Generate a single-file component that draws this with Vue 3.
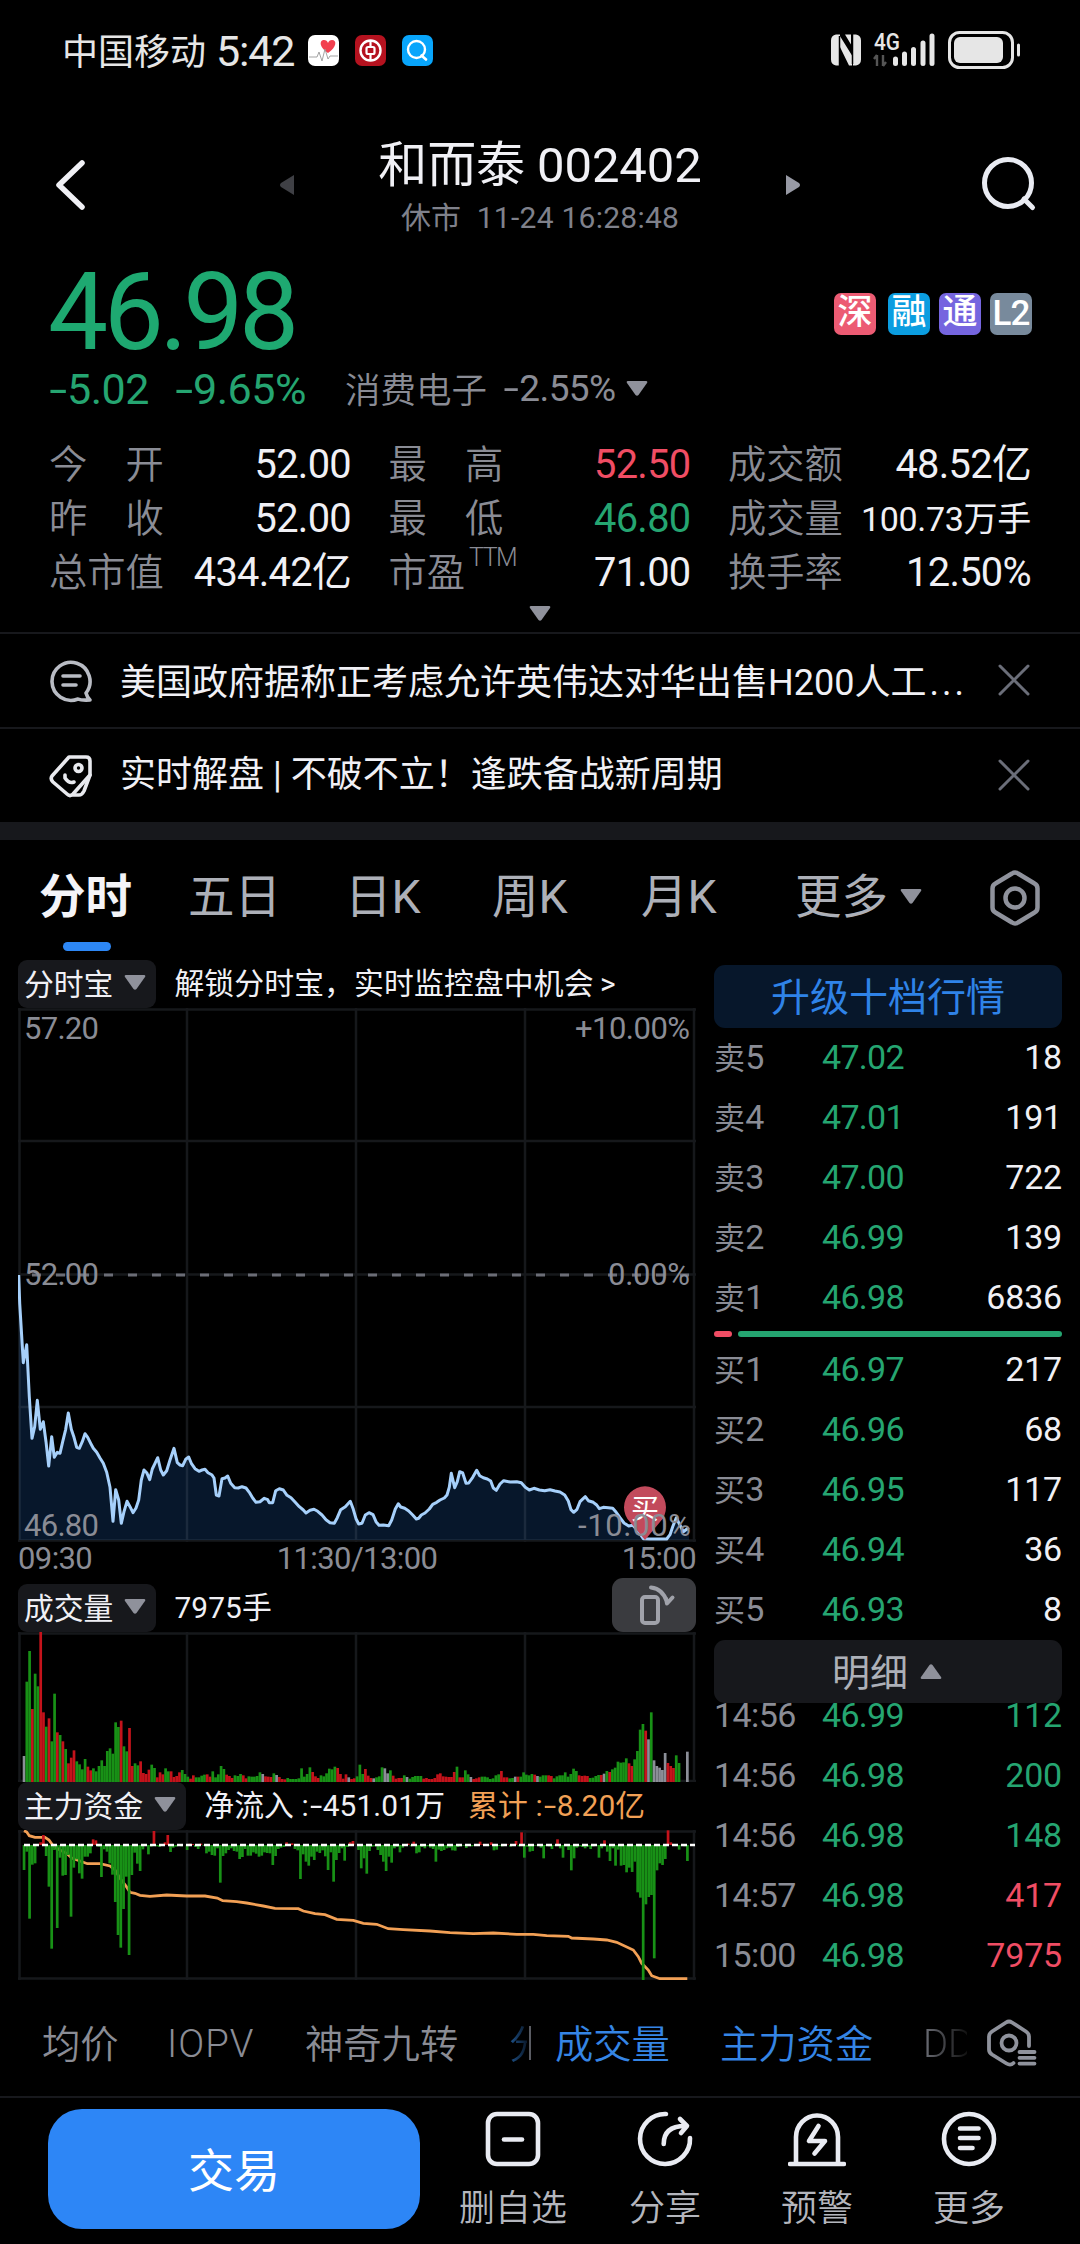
<script setup>
const stats = [
  { label: '今　开', value: '52.00' },
  { label: '最　高', value: '52.50', tone: 'up' },
  { label: '成交额', value: '48.52亿' },
  { label: '昨　收', value: '52.00' },
  { label: '最　低', value: '46.80', tone: 'down' },
  { label: '成交量', value: '100.73万手', small: true },
  { label: '总市值', value: '434.42亿' },
  { label: '市盈', sup: 'TTM', value: '71.00' },
  { label: '换手率', value: '12.50%' },
]
const tags = [
  { t: '深', c: 'sz' },
  { t: '融', c: 'rz' },
  { t: '通', c: 'ht' },
  { t: 'L2', c: 'l2' },
]
const asks = [
  ['5', '47.02', '18'],
  ['4', '47.01', '191'],
  ['3', '47.00', '722'],
  ['2', '46.99', '139'],
  ['1', '46.98', '6836'],
]
const bids = [
  ['1', '46.97', '217'],
  ['2', '46.96', '68'],
  ['3', '46.95', '117'],
  ['4', '46.94', '36'],
  ['5', '46.93', '8'],
]
const ticks = [
  ['14:56', '46.99', '112', 'down'],
  ['14:56', '46.98', '200', 'down'],
  ['14:56', '46.98', '148', 'down'],
  ['14:57', '46.98', '417', 'up'],
  ['15:00', '46.98', '7975', 'up'],
]

// Price curve, in thirds of a pixel: morning and afternoon sessions.
const morning = [
  [56, 75], [59, 160], [70, 338], [80, 284], [88, 440], [96, 565], [104, 530], [112, 451], [121, 538], [130, 515],
  [138, 575], [146, 648], [155, 560], [163, 622], [172, 607], [180, 610], [188, 575], [197, 538], [205, 489],
  [214, 538], [222, 562], [230, 592], [238, 595], [247, 575], [255, 551], [263, 562], [272, 580], [280, 595],
  [290, 607], [300, 624], [310, 640], [320, 667], [330, 712], [339, 814], [347, 719], [356, 750], [364, 820],
  [372, 785], [381, 754], [390, 770], [399, 788], [408, 774], [416, 750], [424, 690], [432, 660], [440, 668],
  [449, 689], [457, 657], [465, 640], [473, 623], [482, 660], [490, 675], [500, 662], [510, 630], [522, 595],
  [532, 638], [540, 645], [548, 647], [557, 628], [566, 621], [574, 640], [585, 656], [597, 664], [606, 660],
  [615, 658], [624, 668], [635, 674], [642, 684], [649, 735], [657, 738], [666, 686], [675, 684], [683, 678],
  [692, 700], [704, 713], [715, 714], [726, 710], [738, 714], [748, 727], [758, 744], [768, 757], [780, 755],
  [793, 745], [803, 749], [808, 758], [818, 758], [827, 722], [838, 716], [850, 720], [861, 736], [873, 743],
  [885, 756], [898, 770], [910, 780], [918, 789], [930, 781], [942, 778], [953, 784], [966, 795], [978, 809],
  [990, 818], [1003, 820], [1012, 803], [1022, 779], [1036, 770], [1051, 754], [1060, 778], [1068, 806], [1076, 822],
]
const afternoon = [
  [36, 370], [46, 345], [57, 338], [69, 344], [78, 365], [87, 376], [100, 375], [116, 377], [125, 360], [136, 327],
  [145, 311], [152, 321], [164, 325], [176, 333], [188, 345], [199, 357], [206, 355], [214, 345], [225, 339],
  [238, 327], [248, 313], [260, 307], [270, 300], [283, 294], [291, 285], [298, 262], [304, 220], [314, 263],
  [322, 245], [329, 215], [338, 219], [348, 250], [356, 249], [368, 232], [380, 211], [389, 227], [400, 233],
  [412, 237], [422, 243], [430, 264], [439, 271], [450, 252], [461, 242], [480, 246], [500, 245], [514, 248],
  [526, 262], [538, 270], [552, 265], [568, 270], [584, 272], [600, 269], [615, 273], [630, 276], [644, 285],
  [655, 303], [663, 329], [671, 337], [681, 328], [690, 305], [706, 290], [715, 302], [730, 307], [740, 315],
  [748, 326], [760, 322], [775, 323], [788, 325], [798, 336], [810, 353], [822, 369], [836, 378], [848, 376],
  [862, 390], [880, 416], [900, 417], [950, 417], [960, 404], [968, 380], [979, 353], [990, 376], [1000, 395], [1012, 386], [1017, 388],
]
const curve = [...morning, ...afternoon.map(([x, y]) => [x + 1050, y + 450])]
  .map(([x, y]) => [x / 3 - 18, y / 3 + 242])
const line = curve.map((p) => p.map((n) => n.toFixed(1)).join(',')).join(' ')
const area = `1,532 ${line} 671,532`

// Minute volume: colour letter plus height.
const vol = (
  'w78 g301 g393 r219 g325 g287 r450 r209 g166 r191 g122 g265 r149 g141 r122 g99 r56 r73 r95 g62 g53 g38 g69 r46 r35 ' +
  'g41 g32 g48 g65 g48 g93 g101 g85 g179 g165 r184 g107 g92 r162 r48 g56 g50 r62 r27 r24 r37 g52 g42 r14 r29 r23 ' +
  'g41 g32 r32 r15 r18 r29 g36 g24 g16 r10 r20 g14 g14 g19 g22 r23 r16 g32 g14 g23 g48 g39 r22 r18 r12 g20 g18 g24 ' +
  'r20 r11 g17 g16 g16 g18 g29 w24 r17 r16 r15 g26 w21 r15 r9 r8 g12 g9 g9 g9 g11 g41 g16 g24 g44 r30 r17 r12 g20 ' +
  'g17 g26 g40 g38 g46 r42 r24 r10 r23 w14 r9 r11 g17 g52 g24 r39 r19 r12 w11 g14 g17 g44 w41 w26 g35 r19 r10 r12 ' +
  'r12 g20 w15 g10 g15 g18 g18 g18 r10 r12 r9 r9 r12 r23 r26 r17 r16 r15 r15 r30 g46 r14 r14 g35 g23 w15 r9 r11 r14 ' +
  'g16 g16 g14 g9 g11 g20 g23 r33 r14 r14 g11 g12 w16 r16 g16 g29 g22 g20 g24 r22 w18 g16 g20 g20 r20 r18 g11 g17 ' +
  'g20 g20 g29 g16 g24 g40 g33 r20 r18 r19 r18 g12 g13 g18 g21 r21 w25 g33 r30 g38 g43 g61 g58 g59 g71 r56 r48 g68 ' +
  'g93 g157 g174 r154 w128 g209 w65 w48 w43 w36 w87 r57 r48 r42 g80 g57 w0 w0 w91'
).split(' ')
const volBars = vol.map((s, i) => ({ x: 4.7 + i * (663.3 / (vol.length - 1)), h: +s.slice(1) / 3, c: s[0] }))

// Net flow per minute; negative values rise above the zero line.
const flow = (
  '75 20 221 59 55 0 -8 -30 33 125 311 15 249 38 92 90 30 215 68 43 85 101 35 35 25 -17 -14 5 96 13 20 55 89 171 270 ' +
  '308 192 95 330 90 23 56 78 13 3 28 5 -42 4 6 2 -8 -30 21 8 5 3 4 0 15 -4 -3 6 12 -4 2 25 20 30 32 10 113 33 25 15 ' +
  '10 18 20 42 36 12 32 32 22 26 35 32 22 24 25 60 33 12 8 6 -8 3 -5 12 16 102 28 50 62 35 45 20 24 16 34 75 22 110 ' +
  '45 24 10 47 6 -8 -12 15 70 40 86 18 5 4 15 30 50 78 35 53 10 5 22 8 3 -4 4 -10 25 22 6 10 4 8 12 50 14 18 15 10 ' +
  '8 16 17 6 4 2 9 3 4 2 1 -10 -2 2 3 -8 16 14 3 4 2 -1 5 -2 -12 4 -38 38 5 20 18 2 3 8 40 3 4 12 2 -17 10 38 4 15 ' +
  '76 40 8 4 6 10 5 12 4 3 38 10 -14 20 48 10 62 14 62 60 82 68 81 50 142 158 405 178 156 150 340 76 55 60 42 -44 -8 2 ' +
  '-3 14 2 4 48'
).split(' ').map(Number)
const flowBars = flow.map((v, i) => ({ x: 4.7 + Math.round(i * (240 / (flow.length - 1))) * 2.764, h: Math.abs(v) / 3, up: v < 0 }))

const cum = [
  [72, 782], [80, 786], [88, 797], [105, 802], [135, 802], [147, 810], [160, 828], [180, 840], [200, 850], [215, 864],
  [240, 873], [262, 881], [300, 881], [330, 888], [345, 900], [360, 925], [378, 948], [390, 967], [405, 970], [420, 976],
  [450, 979], [500, 975], [560, 978], [615, 978], [652, 984], [668, 992], [710, 995], [740, 999], [790, 1008],
  [825, 1015], [895, 1016], [910, 1023], [945, 1031], [975, 1034], [1010, 1048], [1060, 1051], [1090, 1060],
  [1130, 1063], [1165, 1076], [1210, 1079], [1290, 1083], [1350, 1088], [1420, 1091], [1480, 1089], [1550, 1093],
  [1600, 1093], [1640, 1097], [1705, 1099], [1715, 1104], [1780, 1107], [1820, 1110], [1850, 1117], [1900, 1140],
  [1915, 1160], [1925, 1180], [1945, 1200], [1955, 1217], [1980, 1226], [2062, 1226],
].map(([x, y]) => `${(x / 3 - 18).toFixed(1)},${(y / 3 - 260).toFixed(1)}`).join(' ')
</script>

<template>
  <div class="page">
    <div class="status">
      <span class="carrier">中国移动</span><span class="clock">5:42</span>
      <svg class="app" viewBox="0 0 31 31"><rect width="31" height="31" rx="7" fill="#fff" /><path d="M20 18c-10-7-8-13-4-13q3 0 4 3q1-3 4-3c5 0 5 7-4 13z" fill="#f2404f" /><path d="M1 22h8l2-5 3 9 3-12 3 10 2-3h8" fill="none" stroke="#999" stroke-width=".9" /></svg>
      <svg class="app" viewBox="0 0 31 31"><rect width="31" height="31" rx="7" fill="#b5121f" /><circle cx="15.500" cy="15.500" r="10" fill="none" stroke="#fff" stroke-width="2.400" /><rect x="11.500" y="12" width="8" height="7" rx="1.500" fill="none" stroke="#fff" stroke-width="2.200" /><path d="M15.500 5v7M15.500 19v7" stroke="#fff" stroke-width="2.200" /></svg>
      <svg class="app" viewBox="0 0 31 31"><rect width="31" height="31" rx="7" fill="#08a5fb" /><circle cx="14.500" cy="14.500" r="8.500" fill="none" stroke="#fff" stroke-width="2.400" /><path d="M19.500 20.500l4.500 4" stroke="#fff" stroke-width="2.600" stroke-linecap="round" /></svg>
      <svg class="sys" width="192" height="40" viewBox="0 0 192 40">
        <path d="M5 3.500h4v31h-4q-5-1-5-6v-19q0-5 5-6zM8 3.500l13 21v10h-3L8 14zM25 3.500q5 1 5 6v19q0 5-5 6h-3v-31zM14 3.500h6v10z" fill="#e6e6e6" />
        <path d="M8.500 5v30M21.500 3v30" stroke="#000" stroke-width="1.500" />
        <text x="43" y="19" font-size="23" font-weight="500" textLength="26" lengthAdjust="spacingAndGlyphs" fill="#e6e6e6">4G</text>
        <path d="M46 24v11M46 24l-3 4M52 24v11M52 35l3-4" stroke="#555" stroke-width="2.400" fill="none" />
        <g stroke="#e6e6e6" stroke-width="5" stroke-linecap="round"><path d="M64.500 28v4.500M73.500 23v9.500M82.500 18.500v14M92 12v20.500M101 5v27.500" /></g>
        <rect x="118.500" y="1.500" width="63" height="35" rx="10" fill="none" stroke="#e6e6e6" stroke-width="3" />
        <rect x="123" y="6" width="49" height="26" rx="6" fill="#e6e6e6" />
        <path d="M187.500 14v10" stroke="#e6e6e6" stroke-width="3" stroke-linecap="round" />
      </svg>
    </div>

    <header class="head">
      <svg class="back" viewBox="0 0 34 56"><path d="M29 6L6 28l23 22" /></svg>
      <svg class="prev" viewBox="0 0 14 20"><path d="M14 0v20L1 12q-2-2 0-4z" fill="#3f4045" /></svg>
      <div class="title">
        <div class="name">和而泰 002402</div>
        <div class="sub">休市&nbsp; 11-24 16:28:48</div>
      </div>
      <svg class="next" viewBox="0 0 14 20"><path d="M0 0v20l13-8q2-2 0-4z" fill="#9799a4" /></svg>
      <svg class="search" viewBox="0 0 56 56"><circle cx="27" cy="26" r="23.500" /><path d="M43 42l8.500 8.500" /></svg>
    </header>

    <section class="quote">
      <div class="price-row">
        <span class="price">46.98</span>
        <div class="tags"><span v-for="g in tags" :key="g.t" :class="['tag', g.c]">{{ g.t }}</span></div>
      </div>
      <div class="change">
        <span class="chg c1"><b class="m">-</b>5.02</span><span class="chg c2"><b class="m">-</b>9.65%</span>
        <span class="ind">消费电子</span><span class="indv"><b class="m">-</b>2.55%</span>
        <svg class="tri" viewBox="0 0 22 15"><path d="M2 0h18q2 0 1 2l-8.500 12q-1.500 1.500-3 0L1 2Q0 0 2 0z" /></svg>
      </div>
      <div class="stats">
        <div v-for="s in stats" :key="s.label" class="cell">
          <span class="lab">{{ s.label }}<sup v-if="s.sup">{{ s.sup }}</sup></span>
          <span :class="['val', s.tone, { small: s.small }]">{{ s.value }}</span>
        </div>
      </div>
      <div class="expand"><svg class="tri" viewBox="0 0 22 15"><path d="M2 0h18q2 0 1 2l-8.500 12q-1.500 1.500-3 0L1 2Q0 0 2 0z" /></svg></div>
    </section>

    <div class="news">
      <svg class="nicon" viewBox="0 0 44 44"><path d="M37 34a19 19 0 1 0-8 6q3 1.500 12 1q-3-3-4-7z" stroke="#b9bcc4" /><path d="M14 17h17M14 26h13" stroke="#b9bcc4" /></svg>
      <span class="ntext">美国政府据称正考虑允许英伟达对华出售H200人工<span class="dots">...</span></span>
      <svg class="close" viewBox="0 0 32 32"><path d="M2 2l28 28M30 2L2 30" /></svg>
    </div>
    <div class="news second">
      <svg class="nicon" viewBox="0 0 44 44"><path d="M20 3h17q4 0 4 4v14L24 40q-3 3-6 0L4 28q-3-3-1-6z" stroke="#e8e9ee" /><path d="M24 41h6q3 0 5-4l6-16" stroke="#e8e9ee" /><circle cx="29.500" cy="14" r="3.500" stroke="#e8e9ee" /><path d="M16 21v3q4 6 9 4" stroke="#e8e9ee" /></svg>
      <span class="ntext">实时解盘 | 不破不立！逢跌备战新周期</span>
      <svg class="close" viewBox="0 0 32 32"><path d="M2 2l28 28M30 2L2 30" /></svg>
    </div>
    <div class="band"></div>

    <nav class="tabs">
      <span class="tab on">分时</span><span class="tab t2">五日</span><span class="tab t3">日K</span><span class="tab t4">周K</span><span class="tab t5">月K</span><span class="tab t6">更多</span>
      <svg class="tri more" viewBox="0 0 22 15"><path d="M2 0h18q2 0 1 2l-8.500 12q-1.500 1.500-3 0L1 2Q0 0 2 0z" /></svg>
      <svg class="hex" viewBox="0 0 50 56"><path d="M22 3.500q3-2 6 0l16.500 10q3 1.500 3 5v19q0 3.500-3 5L28 52.500q-3 2-6 0L5.500 42.500q-3-1.500-3-5v-19q0-3.500 3-5z" /><circle cx="25" cy="28" r="9.500" /></svg>
    </nav>

    <main class="main">
      <div class="left">
        <div class="tool">
          <span class="chip">分时宝<svg class="tri" viewBox="0 0 22 15"><path d="M2 0h18q2 0 1 2l-8.500 12q-1.500 1.500-3 0L1 2Q0 0 2 0z" /></svg></span>
          <span class="note">解锁分时宝，实时监控盘中机会&thinsp;&gt;</span>
        </div>
        <svg class="chart" width="678" height="534" viewBox="0 0 678 534">
          <polygon :points="area" fill="#07172b" />
          <g class="grid"><path d="M1.500 0V534M169 0V534M338 0V534M507 0V534M676 0V534M0 1.500H678M0 133H678M0 266.500H678M0 399H678M0 532.500H678" /></g>
          <path d="M14 267H674" stroke="#6b6d76" stroke-width="3" stroke-dasharray="9 15" />
          <polyline :points="line" fill="none" stroke="#a6d0fb" stroke-width="3" stroke-linejoin="round" />
          <path d="M627 532L612 514A21 21 0 1 1 642 514z" fill="#c24a5c" />
          <text x="613" y="511" font-size="28" fill="#fff">买</text>
          <g class="axis">
            <text x="6" y="31" textLength="75">57.20</text>
            <text x="6" y="277" textLength="75">52.00</text>
            <text x="6" y="528" textLength="75">46.80</text>
            <text x="557" y="31" textLength="115">+10.00%</text>
            <text x="590" y="277" textLength="82">0.00%</text>
            <text x="560" y="528" textLength="113">-10.00%</text>
          </g>
        </svg>
        <div class="times"><span>09:30</span><span>11:30/13:00</span><span>15:00</span></div>
        <div class="tool tall">
          <span class="chip">成交量<svg class="tri" viewBox="0 0 22 15"><path d="M2 0h18q2 0 1 2l-8.500 12q-1.500 1.500-3 0L1 2Q0 0 2 0z" /></svg></span>
          <span class="note">7975手</span>
          <span class="rotate"><svg viewBox="0 0 84 54"><rect x="30" y="19" width="16" height="26" rx="3" /><path d="M39 9.500Q51 11 55 24M55 25.500l5.500-6M55 25.500l-1-5" /></svg></span>
        </div>
        <svg class="chart" width="678" height="150" viewBox="0 0 678 150">
          <g class="grid"><path d="M1.500 0V150M169 0V150M338 0V150M507 0V150M676 0V150M0 1.500H678M0 149H678" /></g>
          <rect v-for="(b, i) in volBars" :key="i" :x="b.x" :y="150 - b.h" width="2.7" :height="b.h" :class="'b' + b.c" />
        </svg>
        <div class="tool">
          <span class="chip">主力资金<svg class="tri" viewBox="0 0 22 15"><path d="M2 0h18q2 0 1 2l-8.500 12q-1.500 1.500-3 0L1 2Q0 0 2 0z" /></svg></span>
          <span class="note">净流入 :<b class="m">-</b>451.01万</span><span class="note gold">累计 :<b class="m">-</b>8.20亿</span>
        </div>
        <svg class="chart" width="678" height="150" viewBox="0 0 678 150">
          <g class="grid"><path d="M1.500 0V150M169 0V150M338 0V150M507 0V150M676 0V150M0 1.500H678M0 148.500H678" /></g>
          <polyline :points="cum" fill="none" stroke="#f2a055" stroke-width="2.800" />
          <rect v-for="(b, i) in flowBars" :key="i" :x="b.x" :y="b.up ? 15 - b.h : 15" width="2.7" :height="b.h" :class="b.up ? 'br' : 'bg'" />
          <path d="M6 15H677" stroke="#fff" stroke-width="2.400" stroke-dasharray="6 3" />
        </svg>
      </div>

      <div class="right">
        <div class="upgrade">升级十档行情</div>
        <div v-for="r in asks" :key="'s' + r[0]" class="row"><span class="lv">卖<i>{{ r[0] }}</i></span><span class="px">{{ r[1] }}</span><span class="qty">{{ r[2] }}</span></div>
        <div class="ratio"><span class="buy"></span><span class="sell"></span></div>
        <div v-for="r in bids" :key="'b' + r[0]" class="row"><span class="lv">买<i>{{ r[0] }}</i></span><span class="px">{{ r[1] }}</span><span class="qty">{{ r[2] }}</span></div>
        <div class="detail"><span>明细</span><svg class="tri flip" viewBox="0 0 22 15"><path d="M2 0h18q2 0 1 2l-8.500 12q-1.500 1.500-3 0L1 2Q0 0 2 0z" /></svg></div>
        <div class="ticks">
          <div v-for="(r, i) in ticks" :key="i" class="row"><span class="tm">{{ r[0] }}</span><span class="px">{{ r[1] }}</span><span :class="['qty', 'thin', r[3]]">{{ r[2] }}</span></div>
        </div>
      </div>
    </main>

    <div class="inds">
      <span class="i1">均价</span><span class="i2">IOPV</span><span class="i3">神奇九转</span><span class="cut">分</span><span class="sep"></span>
      <span class="blue i4">成交量</span><span class="blue i5">主力资金</span><span class="dd">DD</span>
      <svg class="gear" viewBox="0 0 50 48"><path d="M26.500 44q-3 3-7 .5L5 35.500q-3-2-3-5V17.500q0-3 3-5L19 3.500q3-2 6 0L39 12.500q3 2 3 5v9.500" /><circle cx="22" cy="24" r="7.500" /><path d="M32.500 33h15M32.500 38.800h15M32.500 44.600h15" /></svg>
    </div>

    <footer class="foot">
      <button class="trade">交易</button>
      <div class="act a1"><svg viewBox="0 0 58 58"><rect x="4" y="4" width="50" height="50" rx="9" /><path d="M20 29.500h18" /></svg><span>删自选</span></div>
      <div class="act a2"><svg viewBox="0 0 58 58"><path d="M30 4A25 25 0 1 0 54 28" /><path d="M27.700 34Q27.700 16 49 16M44 9l7 7-6 7" /></svg><span>分享</span></div>
      <div class="act a3"><svg viewBox="0 0 58 58"><path d="M8 54V27a21 21.500 0 0 1 42 0V54M2 54H56" /><path d="M30.500 16L21 31h16l-10.500 12.500" /></svg><span>预警</span></div>
      <div class="act a4"><svg viewBox="0 0 58 58"><circle cx="29" cy="29" r="25" /><path d="M20 18.500h18.500M20 28h18.500M20 38h12.500" /></svg><span>更多</span></div>
    </footer>
  </div>
</template>

<style>
body { background: #000; }
</style>

<style scoped>
.page { width: 1080px; height: 2244px; overflow: hidden; background: #000; color: #f0f0f5; font-family: Roboto, "Noto Sans CJK SC", sans-serif; font-weight: 400; white-space: nowrap; }
svg { display: block; flex: none; }
span { flex: none; }
.up { color: #f04d64 !important; }
.down { color: #25a571 !important; }
.tri { width: 22px; height: 15px; fill: #8f919b; }
.m { display: inline-block; font-weight: inherit; transform: scaleX(1.5); transform-origin: 50% 50%; margin: 0 .09em; }

.status { display: flex; align-items: center; height: 101px; padding: 0 57px 0 62px; box-sizing: border-box; color: #e6e6e6; }
.carrier { width: 154px; margin-top: -3px; font-size: 36px; }
.clock { width: 92px; font-size: 43px; letter-spacing: -1.2px; }
.app { width: 31px; height: 31px; margin-right: 16px; }
.sys { margin-left: auto; font-family: Roboto, sans-serif; }

.head { display: flex; align-items: center; height: 168px; }
.back { width: 34px; height: 56px; margin-left: 53px; fill: none; stroke: #f0f0f5; stroke-width: 5.5; stroke-linecap: round; stroke-linejoin: round; }
.prev { width: 14px; height: 20px; margin-left: 193px; }
.title { width: 492px; padding-top: 9px; text-align: center; }
.name { font-size: 49px; line-height: 56px; letter-spacing: -.1px; }
.sub { font-size: 30px; line-height: 48px; color: #7f818b; letter-spacing: .25px; }
.next { width: 14px; height: 20px; }
.search { width: 56px; height: 56px; margin-left: 181px; fill: none; stroke: #e9ebf2; stroke-width: 5; stroke-linecap: round; }

.price-row { display: flex; justify-content: space-between; align-items: center; height: 86px; padding: 0 48px 0 48px; }
.price { margin-top: 2px; font-size: 107px; line-height: 86px; letter-spacing: -4.4px; color: #1ea971; }
.tags { display: flex; gap: 9px; margin-top: 4px; }
.tag { width: 42px; height: 42px; border-radius: 7px; font-size: 35px; line-height: 40px; text-align: center; color: #fff; font-weight: 500; }
.sz { background: #ec5b73; margin-right: 3px; }
.rz { background: #0b9de0; }
.ht { background: #7565df; }
.l2 { background: #788a9c; letter-spacing: -1px; line-height: 42px; }
.change { display: flex; align-items: center; height: 67px; padding-left: 48px; }
.chg { font-size: 43px; color: #25a571; letter-spacing: -.5px; }
.c1 { width: 126px; }
.c2 { width: 171px; }
.ind { width: 158px; margin-top: -3px; font-size: 35.500px; color: #8a8c95; font-weight: 350; }
.indv { width: 123px; font-size: 37px; color: #8a8c95; letter-spacing: -.6px; }
.stats { display: grid; grid-template-columns: 302px 302px 303px; column-gap: 37.5px; margin: 16px 0 0 49px; }
.cell { display: flex; justify-content: space-between; height: 54px; line-height: 54px; }
.lab { font-size: 38.300px; color: #8a8c95; font-weight: 350; }
.lab sup { font-size: 25px; line-height: 20px; vertical-align: 20px; margin-left: 4px; letter-spacing: -1.6px; }
.val { font-size: 39.800px; letter-spacing: -.7px; }
.val.small { font-size: 34px; letter-spacing: -.3px; }
.expand { display: flex; justify-content: center; height: 26px; padding-top: 6px; }

.news { display: flex; align-items: center; height: 93px; padding: 0 50px 0 49px; border-top: 2px solid #17181c; }
.nicon { width: 44px; height: 44px; margin-right: 27px; fill: none; stroke-width: 3.6; stroke-linecap: round; stroke-linejoin: round; }
.ntext { margin-top: -3px; font-size: 36px; }
.second .ntext { margin-top: -9px; }
.dots { letter-spacing: 3px; margin-left: 3px; }
.close { width: 32px; height: 32px; margin: -2px 0 0 auto; fill: none; stroke: #6b6e79; stroke-width: 3; stroke-linecap: round; }
.band { height: 18px; background: #17181c; }

.tabs { display: flex; height: 120px; line-height: 115px; font-size: 46.500px; color: #adb0b8; }
.tab { position: relative; }
.on { margin-left: 39px; width: 149px; color: #f4f4f8; font-weight: 700; }
.on::after { content: ""; position: absolute; left: 24px; top: 102px; width: 48px; height: 9px; border-radius: 5px; background: #2d87f5; }
.t2 { width: 157px; } .t3 { width: 147px; } .t4 { width: 149px; } .t5 { width: 154px; } .t6 { width: 105px; }
.more { margin-top: 49px; }
.hex { width: 50px; height: 56px; margin: 30px 0 0 68px; fill: none; stroke: #8f929c; stroke-width: 4.5; }

.main { display: flex; gap: 18px; height: 1020px; padding-left: 18px; }
.left { width: 678px; }
.tool { display: flex; align-items: flex-end; height: 48px; line-height: 49px; font-size: 29.800px; }
.tall { height: 54px; }
.chip { display: flex; align-items: center; gap: 11px; height: 48px; padding: 0 10px 0 6px; background: #17181c; border-radius: 9px; }
.chip .tri { margin-top: -3px; }
.note { margin-left: 18px; letter-spacing: .15px; }
.gold { margin-left: 23px; color: #f2a055; }
.rotate { width: 84px; height: 54px; margin-left: auto; border-radius: 11px; background: #3a3b3f; }
.rotate svg { fill: none; stroke: #a0a2aa; stroke-width: 4; stroke-linecap: round; }
.grid { fill: none; stroke: rgba(110, 118, 135, .2); stroke-width: 2.5; }
.axis { font-size: 31px; fill: #8a8c95; }
.bg { fill: #189116; } .br { fill: #c5131b; } .bw { fill: #8b8e97; }
.times { display: flex; justify-content: space-between; height: 36px; line-height: 33px; font-size: 31px; color: #8a8c95; letter-spacing: -.6px; }

.right { width: 348px; font-size: 34px; }
.upgrade { height: 63px; margin: 5px 0 -1px; line-height: 66px; border-radius: 11px; background: #07172b; color: #2f83e8; font-size: 39px; text-align: center; }
.row { display: flex; height: 60px; line-height: 60px; letter-spacing: -.7px; }
.lv { width: 108px; box-sizing: border-box; font-size: 31px; color: #8a8c95; }
.lv i { font-style: normal; font-size: 34px; margin-left: 1px; }
.tm { width: 108px; box-sizing: border-box; color: #8a8c95; letter-spacing: -.6px; }
.px { color: #25a571; }
.qty { margin-left: auto; font-weight: 450; letter-spacing: -.2px; }
.thin { font-weight: 400; }
.ratio { display: flex; gap: 6px; padding: 4px 0 2px; height: 6px; }
.buy { width: 18px; background: #f04d64; border-radius: 3px; }
.sell { flex: 1; background: #25a571; border-radius: 3px; }
.detail { display: flex; justify-content: center; align-items: center; gap: 12px; height: 63px; margin-top: 1px; border-radius: 11px; background: #17181c; color: #adb0b8; font-size: 38px; }
.detail span { margin: -4px 0 0 -2px; }
.flip { transform: rotate(180deg); }
.ticks { overflow: hidden; height: 277px; }
.ticks .row:first-child { margin-top: -18px; }

.inds { display: flex; align-items: center; height: 106px; padding: 10px 0 0 42px; font-size: 38.300px; font-weight: 350; color: #8a8c95; }
.i1, .i3, .blue, .cut { margin-top: -4px; }
.i1 { width: 125px; } .i2 { width: 138px; letter-spacing: 1px; } .i3 { width: 204px; }
.cut { width: 18px; overflow: hidden; background: linear-gradient(90deg, #1f558f, #0a1829); -webkit-background-clip: text; background-clip: text; color: transparent; }
.sep { width: 2px; height: 34px; margin: 0 24px 0 2px; background: #5a5c63; }
.blue { color: #3585e5; }
.i4 { width: 165px; } .i5 { width: 203px; }
.dd { width: 44px; overflow: hidden; background: linear-gradient(90deg, #6d6f77, #111); -webkit-background-clip: text; background-clip: text; color: transparent; }
.gear { width: 50px; height: 48px; margin-left: 20px; fill: none; stroke: #8f929c; stroke-width: 3.8; stroke-linecap: round; }

.foot { position: relative; display: flex; height: 146px; border-top: 2px solid #17181c; }
.trade { width: 372px; height: 120px; margin: 11px 0 0 48px; padding: 0 0 5px; border: 0; border-radius: 34px; background: #2d86f6; color: #fff; font: inherit; font-size: 46px; }
.act { display: flex; flex-direction: column; align-items: center; width: 152px; padding-top: 12px; font-size: 36px; font-weight: 350; color: #b4b6bd; }
.act span { line-height: 60px; margin-top: 11px; }
.act svg { width: 58px; height: 58px; fill: none; stroke: #e9ebf2; stroke-width: 4.6; stroke-linecap: round; stroke-linejoin: round; }
.a1 { margin-left: 17px; }
</style>
